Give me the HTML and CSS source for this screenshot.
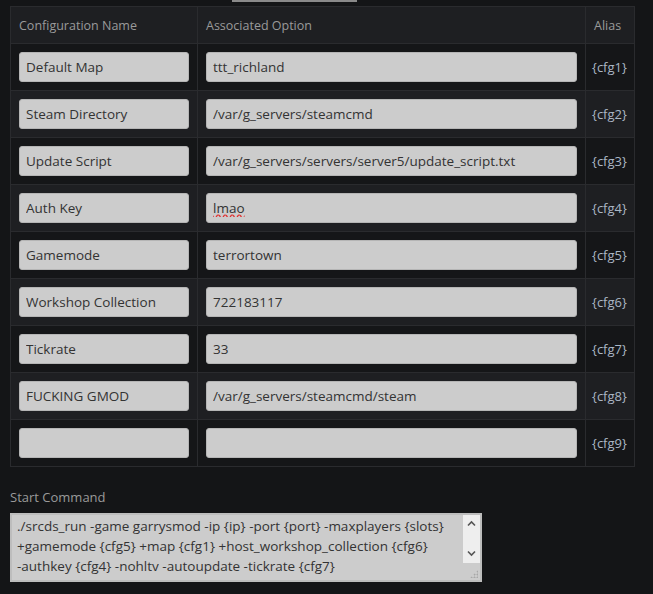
FILE: index.html
```html
<!DOCTYPE html>
<html lang="en">
<head>
    <meta charset="UTF-8">
    <title>Configuration</title>
    <link rel="stylesheet" href="styles.css">
</head>
<body>

<div class="cfg_layout">

    <div class="tab_edge"></div>

    <table class="cfg_table">
        <colgroup>
            <col class="col_name">
            <col class="col_option">
            <col class="col_alias">
        </colgroup>
        <tr>
            <th>Configuration Name</th>
            <th>Associated Option</th>
            <th>Alias</th>
        </tr>
        <tr>
            <td><input type="text" value="Default Map"></td>
            <td><input type="text" value="ttt_richland"></td>
            <td class="td_alias">{cfg1}</td>
        </tr>
        <tr>
            <td><input type="text" value="Steam Directory"></td>
            <td><input type="text" value="/var/g_servers/steamcmd"></td>
            <td class="td_alias">{cfg2}</td>
        </tr>
        <tr>
            <td><input type="text" value="Update Script"></td>
            <td><input type="text" value="/var/g_servers/servers/server5/update_script.txt"></td>
            <td class="td_alias">{cfg3}</td>
        </tr>
        <tr>
            <td><input type="text" value="Auth Key"></td>
            <td><input type="text" value="lmao" class="misspelled"></td>
            <td class="td_alias">{cfg4}</td>
        </tr>
        <tr>
            <td><input type="text" value="Gamemode"></td>
            <td><input type="text" value="terrortown"></td>
            <td class="td_alias">{cfg5}</td>
        </tr>
        <tr>
            <td><input type="text" value="Workshop Collection"></td>
            <td><input type="text" value="722183117"></td>
            <td class="td_alias">{cfg6}</td>
        </tr>
        <tr>
            <td><input type="text" value="Tickrate"></td>
            <td><input type="text" value="33"></td>
            <td class="td_alias">{cfg7}</td>
        </tr>
        <tr>
            <td><input type="text" value="FUCKING GMOD"></td>
            <td><input type="text" value="/var/g_servers/steamcmd/steam"></td>
            <td class="td_alias">{cfg8}</td>
        </tr>
        <tr>
            <td><input type="text" value=""></td>
            <td><input type="text" value=""></td>
            <td class="td_alias">{cfg9}</td>
        </tr>
    </table>

    <div class="start_cmd">
        <label for="command">Start Command</label>
        <div class="cmd_box">
            <textarea id="command" spellcheck="false">./srcds_run -game garrysmod -ip {ip} -port {port} -maxplayers {slots} +gamemode {cfg5} +map {cfg1} +host_workshop_collection {cfg6} -&#8288;authkey {cfg4} -nohltv -autoupdate -tickrate {cfg7}</textarea>
            <div class="cmd_scroll">
                <svg width="17" height="14" viewBox="0 0 17 14"><path d="M5 8.5 L8.5 5 L12 8.5" fill="none" stroke="#555" stroke-width="1.6"/></svg>
                <svg width="17" height="14" viewBox="0 0 17 14"><path d="M5 5.5 L8.5 9 L12 5.5" fill="none" stroke="#555" stroke-width="1.6"/></svg>
            </div>
            <div class="cmd_grip"></div>
        </div>
    </div>

</div>
</body>
</html>
```

FILE: styles.css
```css
*{
    margin: 0px;
    padding: 0px;
    box-sizing: border-box;
}
body{
    background-color: #141517;
    font-family: "Open Sans", "Liberation Sans", sans-serif;
    font-size: 13px;
}

.cfg_layout{
    width: 653px;
    padding: 0px 10px;
}

.tab_edge{
    width: 125px;
    height: 2px;
    margin-left: 222px;
    margin-bottom: 4px;
    background-color: #8a8a8a;
}

.cfg_table{
    width: 624px;
    table-layout: fixed;
    border-collapse: collapse;
    border: 1px solid #2a2b2e;
}

.col_name{
    width: 187px;
}

.col_option{
    width: 388px;
}

.col_alias{
    width: 49px;
}

.cfg_table th{
    height: 37px;
    text-align: left;
    font-weight: normal;
    font-size: 12.5px;
    color: #9a9a9a;
    background-color: #1e1f22;
    padding-left: 8px;
}

.cfg_table td{
    height: 47px;
    padding: 0px 8px;
    vertical-align: middle;
}

.cfg_table th, .cfg_table td{
    border-left: 1px solid #2a2b2e;
    border-top: 1px solid #2a2b2e;
}

.cfg_table tr:nth-child(even) td{
    background-color: #151618;
}

.cfg_table tr:nth-child(odd) td{
    background-color: #1e1f22;
}

.cfg_table td.td_alias{
    color: #aab6c4;
    padding: 0px 0px 0px 6px;
}

.cfg_table input{
    width: 100%;
    height: 30px;
    background-color: #cccccc;
    border: 1px solid #b5b5b5;
    border-radius: 3px;
    padding-left: 6px;
    font-family: "Open Sans", "Liberation Sans", sans-serif;
    font-size: 13.5px;
    color: #333333;
}

.misspelled{
    text-decoration: underline wavy #e03030;
}

.start_cmd{
    margin-top: 21px;
}

.start_cmd label{
    display: block;
    color: #9a9a9a;
    margin-bottom: 7px;
}

.cmd_box{
    position: relative;
    width: 472px;
}

#command{
    display: block;
    width: 472px;
    height: 69px;
    background-color: #cccccc;
    border: 2px solid #bdbdbd;
    padding: 1px 22px 1px 5px;
    font-family: "Open Sans", "Liberation Sans", sans-serif;
    font-size: 13.5px;
    line-height: 20px;
    color: #333333;
    resize: none;
}

.cmd_scroll{
    position: absolute;
    top: 2px;
    right: 2px;
    width: 17px;
    height: 48px;
    background-color: #eeeeee;
    display: flex;
    flex-direction: column;
    justify-content: space-between;
    padding: 2px 0px 3px;
}

.cmd_scroll svg{
    display: block;
}

.cmd_grip{
    position: absolute;
    right: 4px;
    bottom: 4px;
    width: 8px;
    height: 8px;
    background-image: radial-gradient(circle, #a8a8a8 0.9px, transparent 1.1px);
    background-size: 3px 3px;
    clip-path: polygon(100% 0, 100% 100%, 0 100%);
}
```
